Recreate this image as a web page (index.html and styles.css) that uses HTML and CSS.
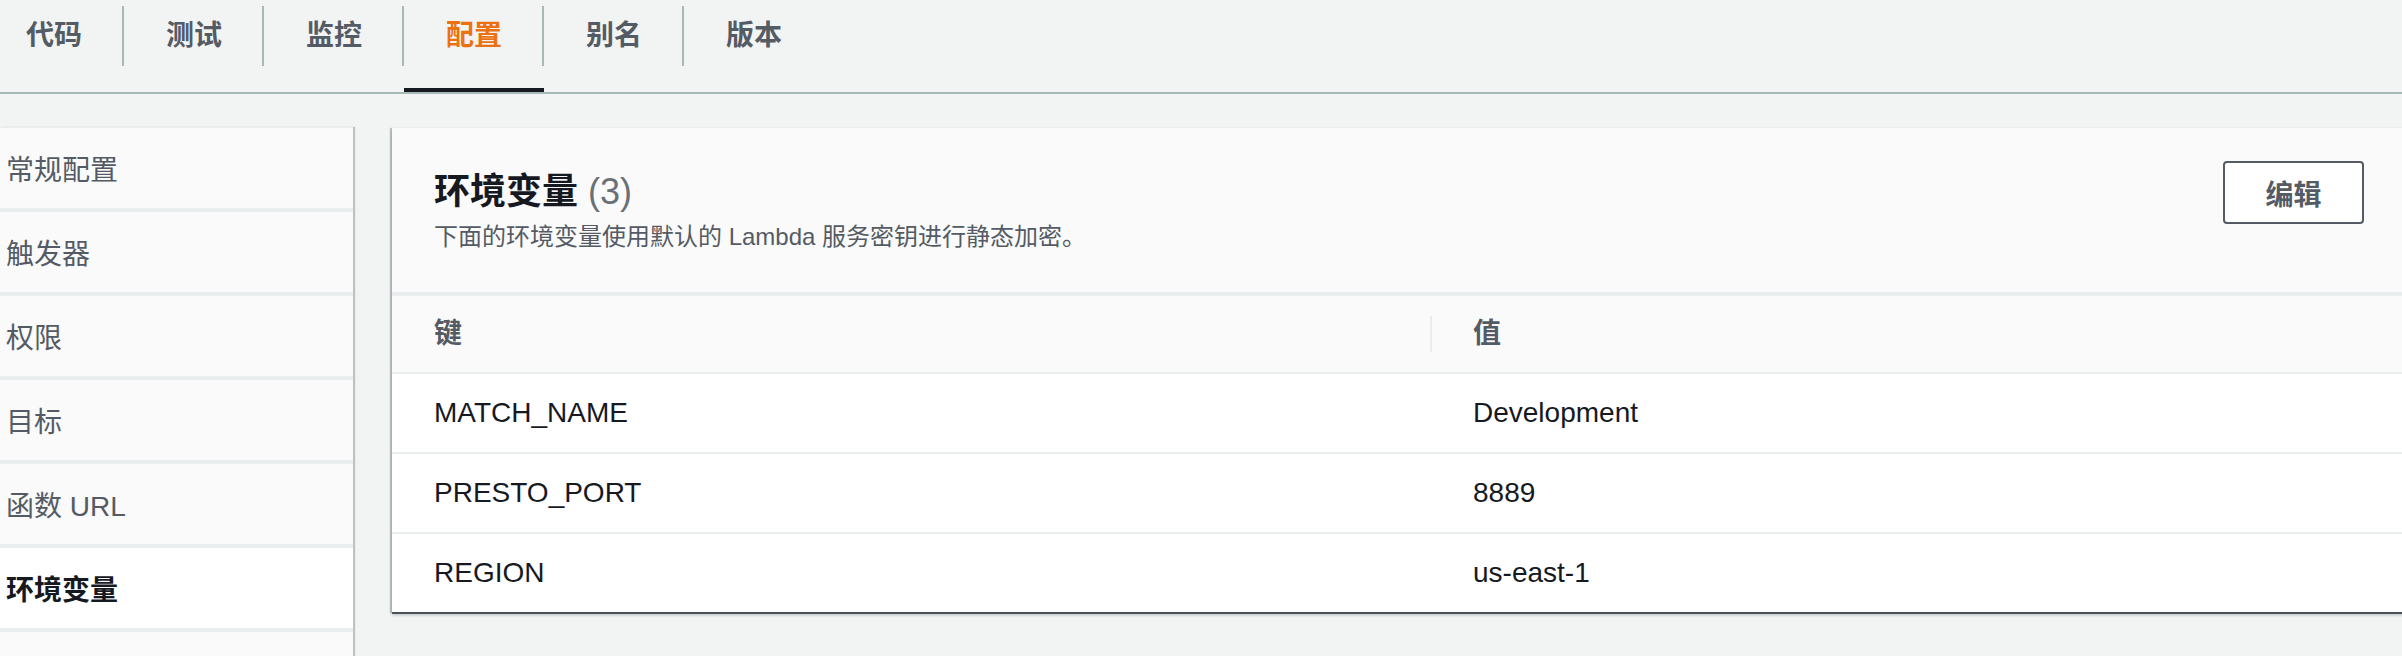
FILE: index.html
```html
<!DOCTYPE html>
<html lang="zh-CN">
<head>
<meta charset="utf-8">
<title>环境变量</title>
<link rel="stylesheet" href="styles.css">
</head>
<body>
<div class="page">
  <nav class="tabs">
    <ul class="tab-list">
      <li class="tab tab-first"><span class="tab-label">代码</span></li>
      <li class="tab"><span class="tab-label">测试</span></li>
      <li class="tab"><span class="tab-label">监控</span></li>
      <li class="tab tab-active"><span class="tab-label">配置</span></li>
      <li class="tab"><span class="tab-label">别名</span></li>
      <li class="tab tab-last"><span class="tab-label">版本</span></li>
    </ul>
  </nav>

  <div class="layout">
    <aside class="side-nav">
      <ul class="side-list">
        <li class="side-item">常规配置</li>
        <li class="side-item">触发器</li>
        <li class="side-item">权限</li>
        <li class="side-item">目标</li>
        <li class="side-item">函数 URL</li>
        <li class="side-item side-active">环境变量</li>
        <li class="side-item"></li>
      </ul>
    </aside>

    <section class="panel">
      <header class="panel-header">
        <div class="panel-heading">
          <h2 class="panel-title">环境变量 <span class="panel-count">(3)</span></h2>
          <p class="panel-desc">下面的环境变量使用默认的 Lambda 服务密钥进行静态加密。</p>
        </div>
        <button class="btn" type="button">编辑</button>
      </header>

      <div class="table">
        <div class="thead">
          <div class="th th-key">键</div>
          <div class="th th-value">值</div>
        </div>
        <div class="tr">
          <div class="td td-key">MATCH_NAME</div>
          <div class="td td-value">Development</div>
        </div>
        <div class="tr">
          <div class="td td-key">PRESTO_PORT</div>
          <div class="td td-value">8889</div>
        </div>
        <div class="tr tr-last">
          <div class="td td-key">REGION</div>
          <div class="td td-value">us-east-1</div>
        </div>
      </div>
    </section>
  </div>
</div>
</body>
</html>
```

FILE: styles.css
```css
html, body {
  margin: 0;
  padding: 0;
  overflow: hidden;
  background: #f2f3f3;
}

body {
  font-family: "Liberation Sans", "Noto Sans CJK SC", sans-serif;
  color: #16191f;
}

ul {
  list-style: none;
  margin: 0;
  padding: 0;
}

/* ---------- Tabs ---------- */
.tabs {
  border-bottom: 2px solid #aab7b8;
}

.tab-list {
  display: flex;
}

.tab {
  padding: 6px 0 22px 0;
  border-bottom: 4px solid transparent;
}

.tab-label {
  display: block;
  height: 60px;
  line-height: 60px;
  padding: 0 40px 0 42px;
  border-right: 2px solid #aab7b8;
  font-size: 28px;
  font-weight: 700;
  color: #545b64;
  white-space: nowrap;
}

.tab-first .tab-label {
  padding-left: 26px;
}

.tab-last .tab-label {
  border-right: none;
}

.tab-active {
  border-bottom-color: #16191f;
}

.tab-active .tab-label {
  color: #ec7211;
}

/* ---------- Layout ---------- */
.layout {
  display: flex;
  align-items: flex-start;
  gap: 39px;
  margin-top: 33px;
  width: 2406px;
}

/* ---------- Side nav ---------- */
.side-nav {
  flex: none;
  width: 353px;
  border-top: 1px solid #eaeded;
  background: #eaeded;
  box-shadow: 2px 0 1px rgba(0, 28, 36, 0.22);
}

.side-item {
  height: 74px;
  line-height: 74px;
  padding: 6px 0 0 6px;
  border-bottom: 4px solid #eaeded;
  background: #fafafa;
  font-size: 28px;
  color: #545b64;
  white-space: nowrap;
}

.side-active {
  background: #ffffff;
  color: #16191f;
  font-weight: 700;
}

/* ---------- Panel ---------- */
.panel {
  flex: none;
  width: 2014px;
  background: #ffffff;
  border-top: 1px solid #eaeded;
  box-shadow: 0 2px 0 rgba(58, 66, 74, 0.85), 0 3px 3px rgba(0, 28, 36, 0.25), -2px 1px 1px rgba(0, 28, 36, 0.22);
}

.panel-header {
  display: flex;
  justify-content: space-between;
  align-items: flex-start;
  padding: 33px 42px 39px 42px;
  background: #fafafa;
  border-bottom: 2px solid #eaeded;
}

.panel-heading {
  margin-top: 9px;
}

.panel-title {
  margin: 0;
  font-size: 36px;
  line-height: 44px;
  font-weight: 700;
  color: #16191f;
}

.panel-count {
  font-weight: 400;
  color: #687078;
}

.panel-desc {
  margin: 7px 0 0 0;
  font-size: 24px;
  line-height: 32px;
  color: #545b64;
}

.btn {
  width: 141px;
  height: 63px;
  margin: 0;
  padding: 0;
  border: 2px solid #545b64;
  border-radius: 4px;
  background: #ffffff;
  font-family: "Liberation Sans", "Noto Sans CJK SC", sans-serif;
  font-size: 28px;
  font-weight: 700;
  color: #545b64;
}

/* ---------- Table ---------- */
.table {
  border-top: 2px solid #eaeded;
}

.thead,
.tr {
  display: grid;
  grid-template-columns: 1038px 1fr;
  align-items: center;
}

.thead {
  height: 76px;
  background: #fafafa;
  border-bottom: 2px solid #eaeded;
}

.th {
  height: 36px;
  line-height: 36px;
  font-size: 28px;
  font-weight: 700;
  color: #545b64;
}

.th-key {
  padding-left: 42px;
}

.th-value {
  padding-left: 41px;
  border-left: 2px solid #eaeded;
}

.tr {
  height: 78px;
  border-bottom: 2px solid #eaeded;
}

.tr-last {
  border-bottom: none;
}

.td {
  font-size: 28px;
  line-height: 36px;
  color: #16191f;
  white-space: nowrap;
}

.td-key {
  padding-left: 42px;
}

.td-value {
  padding-left: 43px;
}
```
